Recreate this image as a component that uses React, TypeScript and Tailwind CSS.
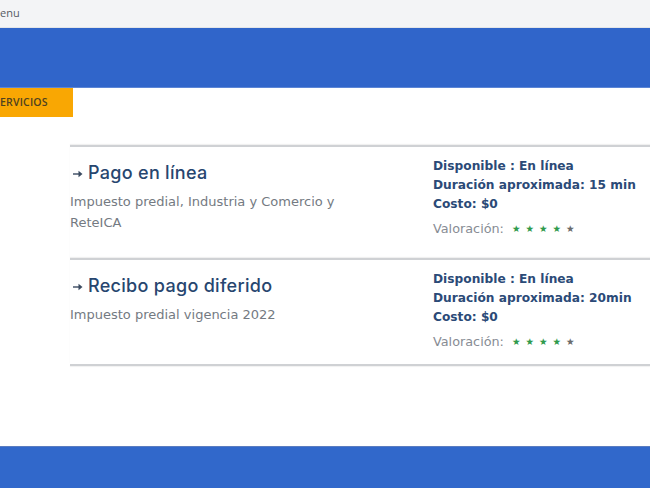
const services = [
  {
    title: "Pago en línea",
    desc: ["Impuesto predial, Industria y Comercio y", "ReteICA"],
    duration: "15 min",
    pad: "pb-[20px]",
  },
  {
    title: "Recibo pago diferido",
    desc: ["Impuesto predial vigencia 2022"],
    duration: "20min",
    pad: "pb-[13px]",
  },
]

function Stars() {
  return (
    <span className="ml-[8px] inline-flex gap-[5px] text-[9.5px]">
      <span className="text-[#2f9a4c]">★</span>
      <span className="text-[#2f9a4c]">★</span>
      <span className="text-[#2f9a4c]">★</span>
      <span className="text-[#2f9a4c]">★</span>
      <span className="text-[#6b6b6b]">★</span>
    </span>
  )
}

function Arrow() {
  return (
    <svg width="10" height="8" viewBox="0 0 10 8" className="ml-[3px] mr-[5px] mt-[1px]">
      <path d="M0 4h6.5" stroke="#3a4a60" strokeWidth="1.4" />
      <path d="M5.5 0.8L9.5 4L5.5 7.2Z" fill="#3a4a60" />
    </svg>
  )
}

export default function App() {
  return (
    <div className="flex h-[488px] w-[650px] flex-col overflow-hidden bg-white font-['Open_Sans',sans-serif]">
      <div className="flex h-[28px] items-center border-b border-[#e3e5e8] bg-[#f3f4f6] text-[11px] text-[#555b63]">
        enu
      </div>
      <div className="h-[60px] border-b border-[#5c86d6] bg-[#3065ca]" />
      <div className="flex">
        <div className="flex h-[29px] w-[73px] items-center bg-[#f9a703] text-[10.5px] font-semibold tracking-[0.2px] text-[#4e4220]">
          ERVICIOS
        </div>
      </div>

      <main className="flex-1 pl-[70px] pt-[28px]">
        {services.map((s) => (
          <div
            key={s.title}
            className={`flex border-t-2 border-[#cfd1d4] pt-[10px] shadow-[0_-1px_1px_rgba(0,0,0,0.06)] ${s.pad}`}
          >
            <div className="w-[363px]">
              <div className="mt-[4px] flex items-center leading-6 text-[#27466f]">
                <Arrow />
                <span className="font-['Inter',sans-serif] text-[18px] font-medium tracking-[0.3px]">{s.title}</span>
              </div>
              <div className="mt-[6px] font-['DejaVu_Sans',sans-serif] text-[13px] leading-[21px] text-[#747a82]">
                {s.desc.map((d) => (
                  <div key={d}>{d}</div>
                ))}
              </div>
            </div>
            <div className="font-['DejaVu_Sans',sans-serif] text-[12.2px] font-bold leading-[19px] text-[#2b4a77]">
              <div>Disponible : En línea</div>
              <div>Duración aproximada: {s.duration}</div>
              <div>Costo: $0</div>
              <div className="mt-[5px] flex items-center text-[12.8px] font-normal text-[#878c94]">
                Valoración:
                <Stars />
              </div>
            </div>
          </div>
        ))}
        <div className="h-[2px] bg-[#cfd1d4] shadow-[0_1px_1px_rgba(0,0,0,0.06)]" />
      </main>

      <footer className="h-[42px] border-t border-[#5a7cc0] bg-[#3168cb]" />
    </div>
  )
}
